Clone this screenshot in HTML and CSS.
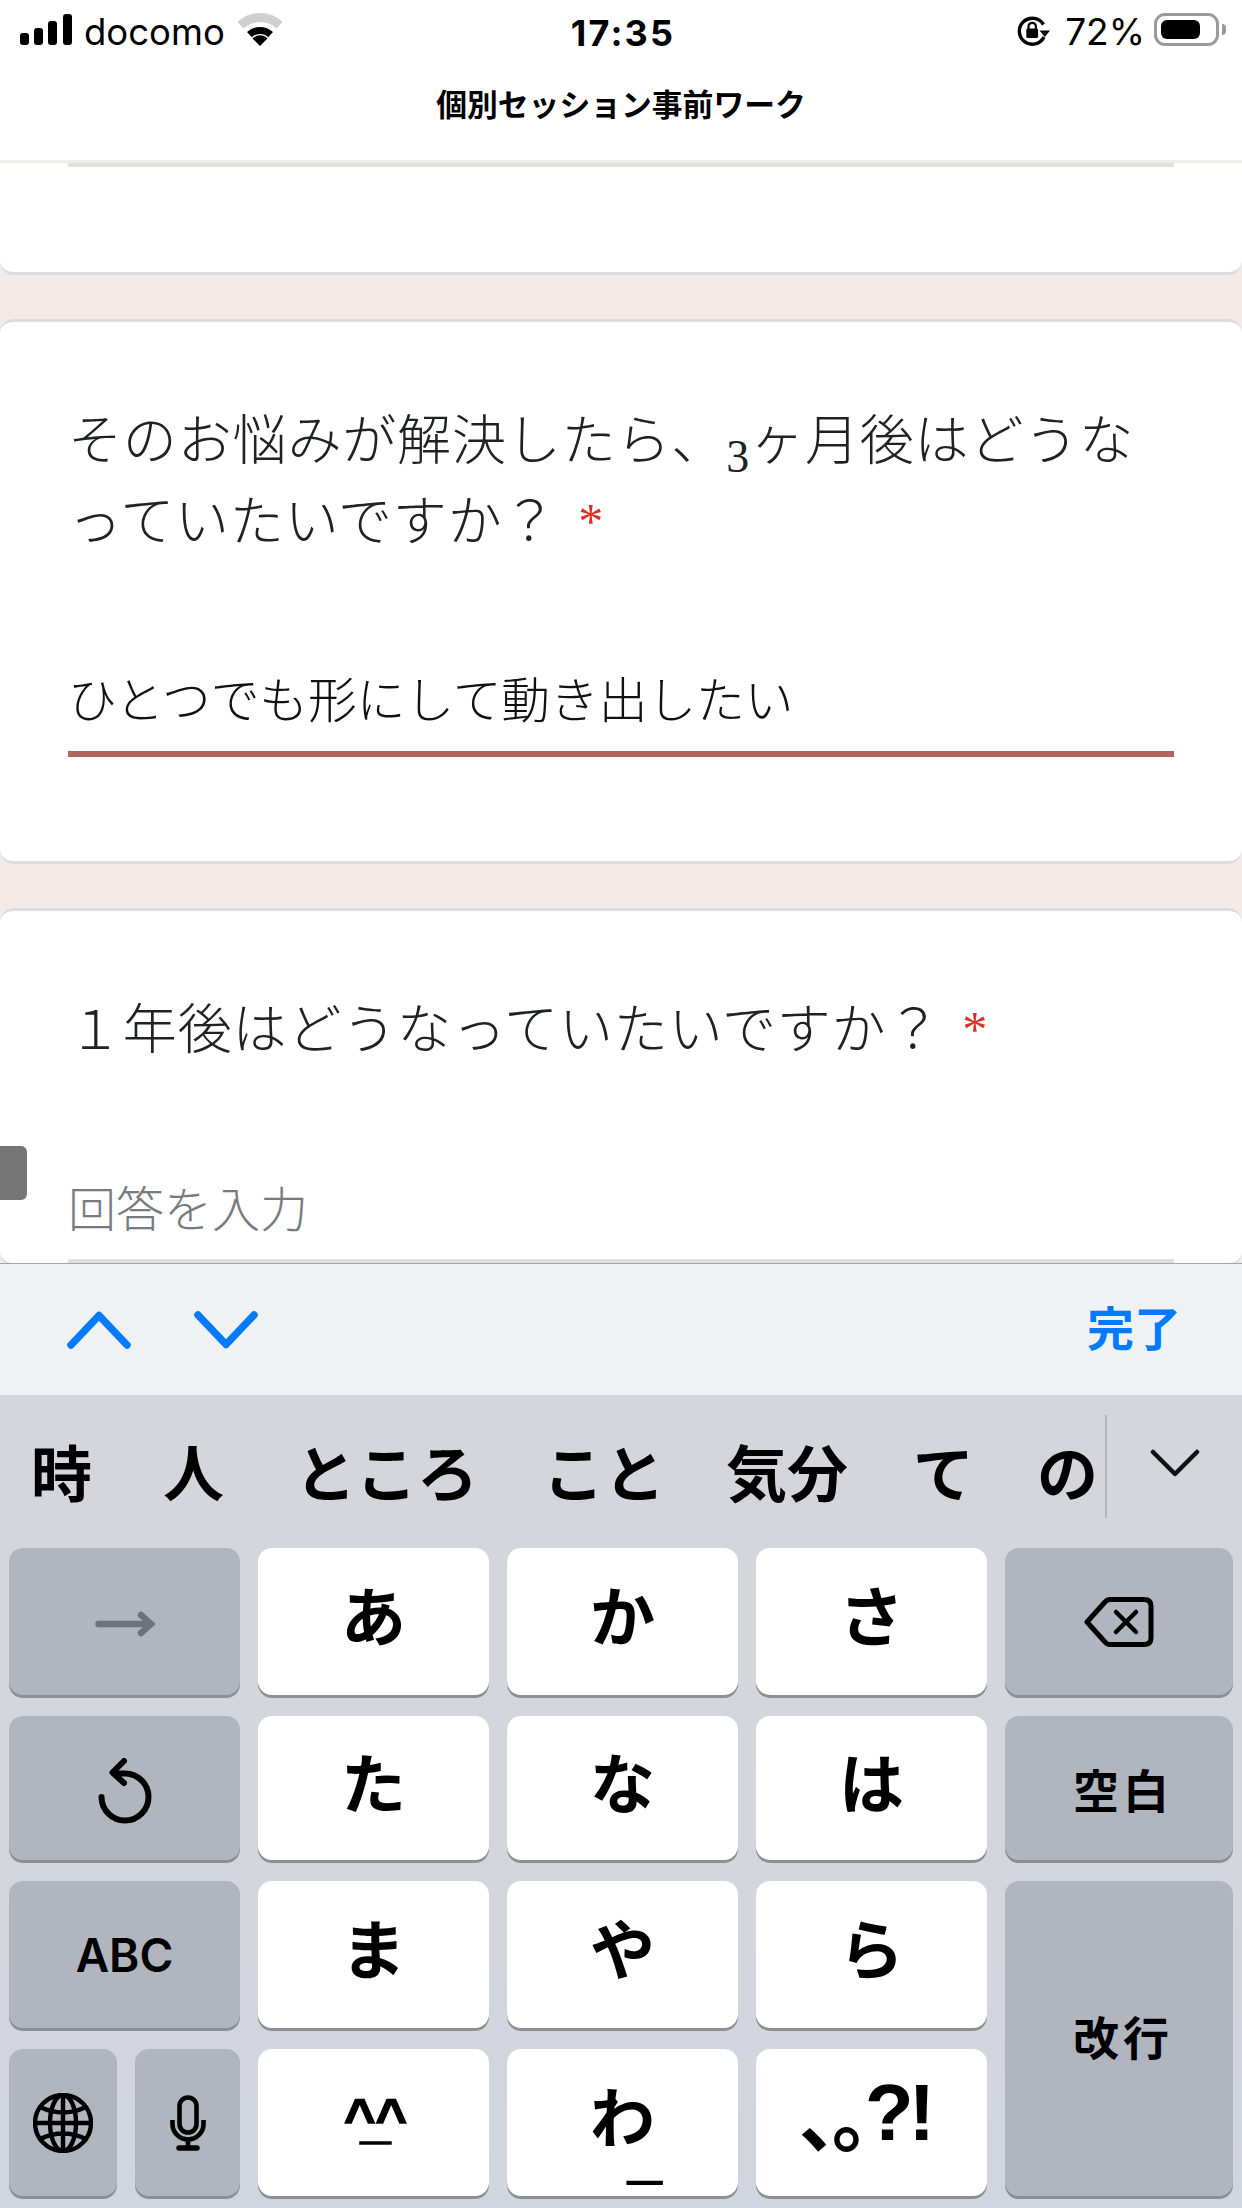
FILE: index.html
```html
<!DOCTYPE html>
<html lang="ja">
<head>
    <meta charset="UTF-8">
    <meta name="viewport" content="width=device-width, initial-scale=1.0">
    <title>個別セッション事前ワーク</title>
    <link rel="stylesheet" href="styles.css">
</head>
<body>

    <header class="top">
        <div class="status">
            <div class="status-left">
                <svg class="signal" viewBox="0 0 52 31" width="52" height="31">
                    <rect x="0" y="19" width="9" height="12" rx="3"/>
                    <rect x="14" y="14" width="9" height="17" rx="3"/>
                    <rect x="28" y="7" width="9" height="24" rx="3"/>
                    <rect x="43" y="0" width="9" height="31" rx="3"/>
                </svg>
                <span class="carrier">docomo</span>
                <svg class="wifi" viewBox="0 0 44 33" width="44" height="33">
                    <path d="M2.6 12.2A28.5 28.5 0 0 1 41.4 12.2" fill="none" stroke="#cfcfcf" stroke-width="9"/>
                    <path d="M11.4 21.6A15.5 15.5 0 0 1 32.6 21.6" fill="none" stroke="#000" stroke-width="7"/>
                    <path d="M22 33L14.5 25.5A10.5 10.5 0 0 1 29.5 25.5Z"/>
                </svg>
            </div>
            <span class="clock">17:35</span>
            <div class="status-right">
                <svg class="rotation" viewBox="0 0 33 30" width="33" height="30">
                    <path d="M27 21A13 13 0 1 1 26.5 8.5" fill="none" stroke="#000" stroke-width="3.4"/>
                    <path d="M22.5 14.5H33L27.8 21Z"/>
                    <path d="M11.5 13V10.5a3.7 3.7 0 0 1 7.4 0V13" fill="none" stroke="#000" stroke-width="2.2"/>
                    <rect x="9.3" y="12.5" width="11.8" height="9.5" rx="1.5"/>
                </svg>
                <span class="battery-pct">72%</span>
                <div class="battery"><div class="battery-fill"></div></div>
                <div class="battery-nub"></div>
            </div>
        </div>
        <h1 class="page-title">個別セッション事前ワーク</h1>
    </header>

    <main class="form-page">
        <section class="card card-prev">
            <div class="field-line"></div>
        </section>

        <section class="card card-active">
            <p class="question">そのお悩みが解決したら、<span class="digit">3</span>ヶ月後はどうな<br>っていたいですか？<span class="req">*</span></p>
            <div class="answer">ひとつでも形にして動き出したい</div>
            <div class="field-line active"></div>
        </section>

        <section class="card card-next">
            <p class="question">１年後はどうなっていたいですか？<span class="req">*</span></p>
            <div class="answer placeholder">回答を入力</div>
            <div class="field-line"></div>
        </section>

        <div class="side-handle"></div>
    </main>

    <div class="accessory">
        <div class="arrows">
            <svg viewBox="0 0 64 38" width="64" height="38"><path d="M4 34L32 4.500L60 34" fill="none" stroke="#007aff" stroke-width="7.500" stroke-linecap="round" stroke-linejoin="round"/></svg>
            <svg viewBox="0 0 64 38" width="64" height="38"><path d="M4 4L32 33.500L60 4" fill="none" stroke="#007aff" stroke-width="7.500" stroke-linecap="round" stroke-linejoin="round"/></svg>
        </div>
        <span class="done">完了</span>
    </div>

    <div class="keyboard">
        <div class="candidates">
            <ul class="cand-list">
                <li>時</li>
                <li>人</li>
                <li>ところ</li>
                <li>こと</li>
                <li>気分</li>
                <li>て</li>
                <li>の</li>
            </ul>
            <div class="cand-toggle">
                <svg viewBox="0 0 50 28" width="50" height="28"><path d="M3 3L25 25L47 3" fill="none" stroke="#111" stroke-width="4.500" stroke-linecap="round" stroke-linejoin="round"/></svg>
            </div>
        </div>

        <div class="keys">
            <div class="key dark">
                <svg class="next-arrow" viewBox="0 0 62 26" width="62" height="26"><path d="M4.500 13H56M47 4L57 13L47 22" fill="none" stroke="#6e737b" stroke-width="6.500" stroke-linecap="round"/></svg>
            </div>
            <div class="key kana">あ</div>
            <div class="key kana">か</div>
            <div class="key kana">さ</div>
            <div class="key dark">
                <svg viewBox="0 0 70 50" width="70" height="50">
                    <path d="M3 25L21 5Q23 2.500 26 2.500H60Q67 2.500 67 9V41Q67 47.500 60 47.500H26Q23 47.500 21 45Z" fill="none" stroke="#000" stroke-width="5" stroke-linejoin="round"/>
                    <path d="M32 15L52 35M52 15L32 35" fill="none" stroke="#000" stroke-width="4.500" stroke-linecap="round"/>
                </svg>
            </div>

            <div class="key dark">
                <svg class="undo" viewBox="0 0 54 66" width="54" height="66">
                    <path d="M3.500 39A23.500 23.500 0 1 0 27 15.500H17" fill="none" stroke="#000" stroke-width="6" stroke-linecap="round"/>
                    <path d="M26 3L14.500 14.500L26 25" fill="none" stroke="#000" stroke-width="6" stroke-linecap="round" stroke-linejoin="round"/>
                </svg>
            </div>
            <div class="key kana">た</div>
            <div class="key kana">な</div>
            <div class="key kana">は</div>
            <div class="key dark label">空白</div>

            <div class="key dark abc">ABC</div>
            <div class="key kana">ま</div>
            <div class="key kana">や</div>
            <div class="key kana">ら</div>
            <div class="key dark label enter">改行</div>

            <div class="key-pair">
                <div class="key dark">
                    <svg viewBox="0 0 60 60" width="60" height="60" fill="none" stroke="#000" stroke-width="4.400">
                        <circle cx="30" cy="30" r="28"/>
                        <ellipse cx="30" cy="30" rx="13" ry="28"/>
                        <path d="M30 2V58M2 30H58M7 14Q30 25 53 14M7 46Q30 35 53 46"/>
                    </svg>
                </div>
                <div class="key dark">
                    <svg viewBox="0 0 36 56" width="36" height="56" fill="none" stroke="#000" stroke-width="4.600">
                        <rect x="9.500" y="2.500" width="17" height="35" rx="8.500"/>
                        <path d="M2.500 25V29A15.500 15.500 0 0 0 33.500 29V25M18 45V53"/>
                        <path d="M9 53H27" stroke-width="5.500" stroke-linecap="round"/>
                    </svg>
                </div>
            </div>
            <div class="key kana face">^_^</div>
            <div class="key kana wa">わ<span class="wa-bar">_</span></div>
            <div class="key kana punct"><span class="punct-small">、。</span>?!</div>
        </div>
    </div>

</body>
</html>
```

FILE: styles.css
```css
/* Global Styles */
* {
    box-sizing: border-box;
    margin: 0;
    padding: 0;
}
body {
    width: 1242px;
    height: 2208px;
    overflow: hidden;
    display: flex;
    flex-direction: column;
    background: #fff;
    color: #000;
    font-family: "Inter", "Noto Sans CJK JP", sans-serif;
}

/* Status bar + title */
.top {
    height: 160px;
    background: #fff;
}
.status {
    height: 65px;
    padding: 13px 16px 0 20px;
    display: grid;
    grid-template-columns: 1fr auto 1fr;
    align-items: start;
}
.status-left {
    display: flex;
    align-items: flex-start;
}
.signal {
    margin-top: 1px;
}
.carrier {
    margin-left: 12px;
    font-size: 36.500px;
    line-height: 38px;
    font-family: "Inter", sans-serif;
}
.wifi {
    margin-left: 13px;
}
.clock {
    font-family: "Inter", sans-serif;
    font-size: 36px;
    font-weight: 700;
    letter-spacing: 2.200px;
    line-height: 40px;
}
.status-right {
    display: flex;
    justify-content: flex-end;
    align-items: flex-start;
}
.rotation {
    margin-top: 3px;
}
.battery-pct {
    margin-left: 15px;
    font-size: 37px;
    line-height: 38px;
}
.battery {
    margin-left: 9px;
    width: 65px;
    height: 33px;
    padding: 4px;
    border: 3px solid #9a9a9a;
    border-radius: 11px;
}
.battery-fill {
    width: 39px;
    height: 100%;
    background: #000;
    border-radius: 6px;
}
.battery-nub {
    margin: 11px 0 0 3px;
    width: 4px;
    height: 11px;
    background: #9a9a9a;
    border-radius: 0 4px 4px 0;
}
.page-title {
    margin-top: 20px;
    font-family: "Noto Sans CJK JP", sans-serif;
    font-size: 30.800px;
    line-height: 36px;
    font-weight: 700;
    text-align: center;
}

/* Form */
.form-page {
    position: relative;
    height: 1103px;
    overflow: hidden;
    background: #f4eae8;
    border-top: 2px solid #eeeeee;
}
.card {
    padding: 0 68px;
    background: #fff;
    border: 0 solid #dadce0;
    border-width: 3px 0;
    border-radius: 14px;
}
.card-prev {
    height: 112px;
    border-top: none;
    border-radius: 0 0 14px 14px;
}
.card-active {
    margin-top: 44px;
    height: 545px;
    padding-top: 80px;
}
.card-next {
    margin-top: 44px;
    padding-top: 80px;
}
.field-line {
    height: 4px;
    background: #e0e0e0;
}
.card-prev .field-line {
    margin-top: 1px;
}
.card-active .field-line {
    margin-top: 24px;
}
.card-next .field-line {
    margin-top: 23px;
}
.field-line.active {
    height: 6px;
    background: #b0655a;
}
.question {
    font-family: "Liberation Serif", "Noto Sans CJK JP", serif;
    font-size: 54px;
    font-weight: 300;
    letter-spacing: 0.850px;
    line-height: 81px;
    color: #202124;
}
.digit {
    font-size: 46px;
    line-height: 0;
    position: relative;
    top: 12px;
}
.req {
    margin-left: 21px;
    font-family: "Liberation Serif", serif;
    font-size: 50px;
    line-height: 0;
    position: relative;
    top: -3px;
    color: #d93025;
}
.answer {
    margin-top: 103px;
    font-family: "Noto Sans CJK JP", sans-serif;
    font-size: 48.700px;
    font-weight: 300;
    line-height: 60px;
    color: #111;
}
.placeholder {
    font-size: 48px;
    color: #767b80;
    margin-top: 104px;
}
.side-handle {
    position: absolute;
    left: 0;
    top: 984px;
    width: 27px;
    height: 54px;
    background: #757575;
    border-radius: 0 6px 6px 0;
}

/* Accessory bar above the keyboard */
.accessory {
    height: 132px;
    padding: 0 61px 0 67px;
    display: flex;
    justify-content: space-between;
    align-items: center;
    background: #f0f1f2;
    border-top: 1px solid #a3a5a8;
}
.arrows {
    display: flex;
    gap: 63px;
}
.done {
    margin-top: -8px;
    font-family: "Noto Sans CJK JP", sans-serif;
    font-size: 47px;
    font-weight: 700;
    color: #007aff;
}

/* Keyboard */
.keyboard {
    flex: 1;
    padding: 0 9px;
    background: linear-gradient(#d5d6db, #d1d5dd);
    font-family: "Noto Sans CJK JP", sans-serif;
}
.candidates {
    height: 153px;
    display: flex;
    align-items: center;
    position: relative;
}
.cand-list {
    list-style: none;
    width: 1096px;
    height: 103px;
    margin-top: -2px;
    display: flex;
    align-items: center;
    font-size: 61px;
    font-weight: 700;
    line-height: 103px;
}
.cand-list li:nth-child(1) { margin-left: 22px; }
.cand-list li:nth-child(2) { margin-left: 71px; }
.cand-list li:nth-child(3) { margin-left: 71px; }
.cand-list li:nth-child(4) { margin-left: 65px; }
.cand-list li:nth-child(5) { margin-left: 61px; }
.cand-list li:nth-child(6) { margin-left: 65px; }
.cand-list li:nth-child(7) { margin-left: 63px; }
.cand-toggle {
    margin: -10px 0 0 0;
    padding: 0 0 8px 43px;
    height: 103px;
    display: flex;
    align-items: center;
    border-left: 2px solid #b3b5ba;
}
.keys {
    display: grid;
    grid-template-columns: 231px 231px 231px 231px 228px;
    grid-template-rows: 147px 144px 147px 147px;
    gap: 21px 18px;
}
.key {
    display: flex;
    align-items: center;
    justify-content: center;
    background: #fff;
    border-radius: 14px;
    box-shadow: 0 3px 0 #8e8f94;
}
.key.dark {
    background: #b1b5be;
}
.kana {
    font-size: 65px;
    font-weight: 700;
    line-height: 1;
    padding-bottom: 16px;
}
.next-arrow {
    margin-top: 4px;
}
.label {
    padding-left: 8px;
    font-size: 46px;
    font-weight: 700;
    letter-spacing: 4px;
}
.enter {
    grid-row: span 2;
    padding-bottom: 8px;
}
.abc {
    font-family: "Inter", sans-serif;
    font-size: 46px;
    font-weight: 600;
}
.key-pair {
    display: grid;
    grid-template-columns: 108px 105px;
    gap: 18px;
}
.undo {
    margin-top: 6px;
}
.face {
    font-family: "Liberation Sans", sans-serif;
    font-size: 54px;
    letter-spacing: -15px;
    padding: 0 11px 10px 0;
    -webkit-text-stroke: 1.500px #000;
}
.wa {
    position: relative;
}
.wa-bar {
    position: absolute;
    left: 121px;
    top: 78px;
    font-family: "Liberation Sans", sans-serif;
    font-size: 60px;
    -webkit-text-stroke: 2px #000;
}
.punct {
    font-family: "Liberation Sans", sans-serif;
    font-size: 80px;
    letter-spacing: -5px;
    padding: 0 14px 20px 0;
}
.punct-small {
    font-family: "Noto Sans CJK JP", sans-serif;
    font-size: 76px;
    letter-spacing: -43px;
    text-spacing-trim: space-all;
}
```
